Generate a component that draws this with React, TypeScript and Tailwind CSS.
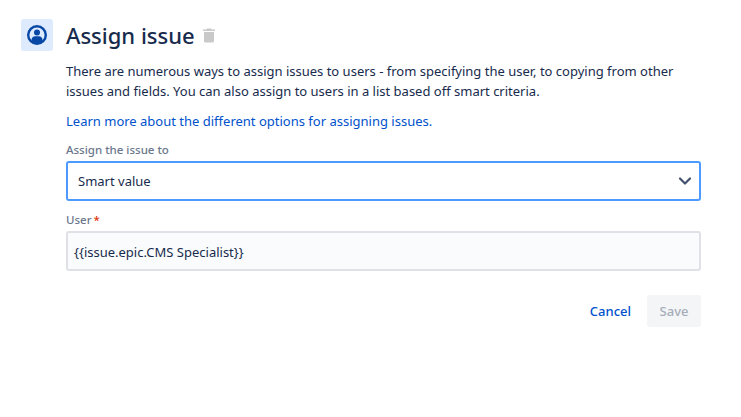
const font = "font-['Noto_Sans',sans-serif]";

const UserIcon = () => (
  <svg width="24" height="24" viewBox="0 0 24 24">
    <circle cx="12" cy="12" r="8.8" fill="none" stroke="#0747a6" strokeWidth="2.4" />
    <circle cx="12" cy="9.4" r="3" fill="#0747a6" />
    <path d="M6.6 18.2v-1.6c0-2 1.6-3.4 3.4-3.4h4c1.8 0 3.4 1.4 3.4 3.4v1.6c-1.5 1.2-3.3 1.8-5.4 1.8s-3.9-.6-5.4-1.8z" fill="#0747a6" />
  </svg>
);

const TrashIcon = () => (
  <svg width="12" height="15" viewBox="0 0 12 14" fill="#c9c9c9">
    <path d="M4 0h4l.6 1H12v1.6H0V1h3.4z" />
    <path d="M1 3.6h10V12.5c0 .8-.6 1.5-1.5 1.5h-7C1.600 14 1 13.300 1 12.500z" />
  </svg>
);

const Chevron = () => (
  <svg width="14" height="10" viewBox="0 0 14 10" fill="none" stroke="#42526e" strokeWidth="2.2" strokeLinecap="round" strokeLinejoin="round">
    <path d="M2 2.500l5 5 5-5" />
  </svg>
);

export default function App() {
  return (
    <div className={`w-[741px] h-[417px] bg-white flex gap-[13px] pl-[21px] pt-[19px] ${font}`}>
      <div className="w-[32px] h-[32px] rounded-[3px] bg-[#deebff] flex items-center justify-center shrink-0">
        <UserIcon />
      </div>
      <div className="w-[635px] flex flex-col">
        <div className="flex items-center gap-[8px] h-[32px]">
          <h1 className="text-[22px] leading-[32px] font-medium text-[#172b4d]">Assign issue</h1>
          <TrashIcon />
        </div>
        <p className="mt-[10px] text-[13px] leading-[20px] text-[#172b4d]">
          There are numerous ways to assign issues to users - from specifying the user, to copying from other issues and fields. You can also assign to users in a list based off smart criteria.
        </p>
        <a className="mt-[10px] text-[13px] leading-[20px] text-[#0052cc]">
          Learn more about the different options for assigning issues.
        </a>
        <label className="mt-[11px] text-[11.500px] leading-[16px] font-medium text-[#6b778c]">Assign the issue to</label>
        <div className="mt-[3px] h-[40px] rounded-[3px] border-2 border-[#4c9aff] bg-white flex items-center justify-between pl-[10px] pr-[7px]">
          <span className="pt-[1px] text-[13px] text-[#172b4d]">Smart value</span>
          <Chevron />
        </div>
        <label className="mt-[11px] text-[11.500px] leading-[16px] font-medium text-[#6b778c]">
          User<span className="text-[#de350b] ml-[2px]">*</span>
        </label>
        <div className="mt-[3px] h-[40px] rounded-[3px] border-2 border-[#dfe1e6] bg-[#fafbfc] flex items-center pl-[6px]">
          <span className="pt-[3px] text-[13px] text-[#172b4d]">{"{{issue.epic.CMS Specialist}}"}</span>
        </div>
        <div className="mt-[24px] flex justify-end items-center gap-[16px]">
          <button className="pt-[1px] text-[13px] font-medium text-[#0052cc]">Cancel</button>
          <button className="pt-[1px] w-[54px] h-[32px] rounded-[3px] bg-[#f4f5f7] text-[13px] font-medium text-[#a5adba]">Save</button>
        </div>
      </div>
    </div>
  );
}
